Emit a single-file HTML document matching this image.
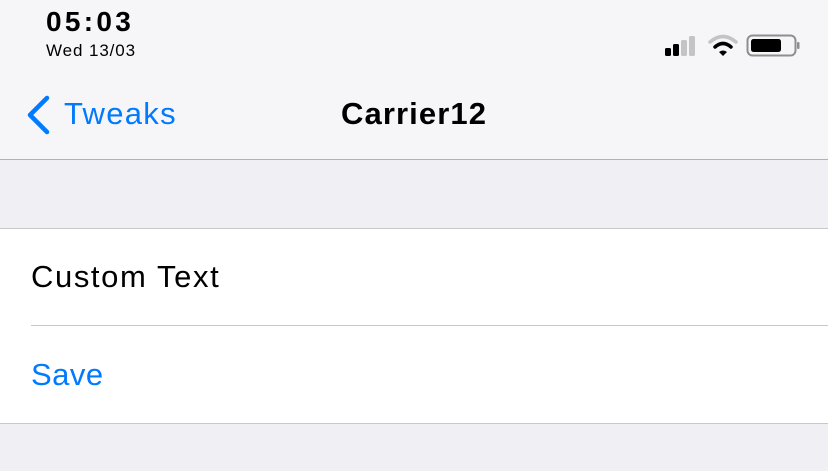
<!DOCTYPE html>
<html><head><style>
body{margin:0;width:828px;height:471px;background:#efeff4;font-family:"Liberation Sans",sans-serif;position:relative;overflow:hidden}
.top{position:absolute;left:0;top:0;width:828px;height:159px;background:#f6f6f8;border-bottom:1px solid #b2b2b6}
.t{position:absolute;white-space:nowrap}
</style></head><body>
<div class="top">
<div class="t" style="left:46px;top:6px;font-size:28px;font-weight:bold;letter-spacing:3.3px">05:03</div>
<div class="t" style="left:46px;top:41px;font-size:17px;letter-spacing:0.9px">Wed 13/03</div>
<svg class="t" style="left:660px;top:30px" width="150" height="32">
<rect x="5" y="18" width="6" height="8" rx="1.5" fill="#000"/>
<rect x="13" y="14" width="6" height="12" rx="1.5" fill="#000"/>
<rect x="21" y="10" width="6" height="16" rx="1.5" fill="#c4c4c6"/>
<rect x="29" y="6" width="6" height="20" rx="1.5" fill="#c4c4c6"/>
<path d="M50 12 Q63 1 76 12" stroke="#c4c4c6" stroke-width="3.5" fill="none" stroke-linecap="round"/>
<path d="M55 17 Q63 10 71 17" stroke="#000" stroke-width="3.5" fill="none" stroke-linecap="round"/>
<path d="M59 22 L63 26 L67 22 Q63 19 59 22Z" fill="#000"/>
<rect x="87.5" y="5.5" width="48" height="20" rx="5" fill="none" stroke="#8e8e92" stroke-width="2"/>
<rect x="91" y="9" width="30" height="13" rx="2.5" fill="#000"/>
<rect x="137" y="12" width="2.5" height="7" rx="1" fill="#8e8e92"/>
</svg>
<svg class="t" style="left:24px;top:95px" width="28" height="40"><path d="M23 3 L6 20 L23 37" stroke="#007aff" stroke-width="4.5" fill="none" stroke-linecap="round" stroke-linejoin="round"/></svg>
<div class="t" style="left:64px;top:96px;font-size:31px;color:#007aff;letter-spacing:1.3px">Tweaks</div>
<div class="t" style="left:341px;top:96px;font-size:31px;font-weight:bold;letter-spacing:1.1px">Carrier12</div>
</div>
<div class="t" style="left:0;top:228px;width:828px;height:194px;background:#fff;border-top:1px solid #c8c7cc;border-bottom:1px solid #c8c7cc"></div>
<div class="t" style="left:31px;top:325px;width:797px;height:1px;background:#c8c7cc"></div>
<div class="t" style="left:31px;top:259px;font-size:31px;letter-spacing:1.6px">Custom Text</div>
<div class="t" style="left:31px;top:357px;font-size:31px;color:#007aff;letter-spacing:0.5px">Save</div>
</body></html>
